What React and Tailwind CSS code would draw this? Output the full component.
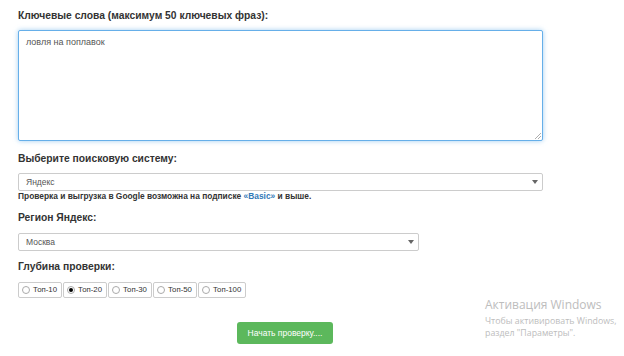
import { useState } from "react";

const depths = ["Топ-10", "Топ-20", "Топ-30", "Топ-50", "Топ-100"];

function Arrow() {
  return (
    <svg width="6" height="4" viewBox="0 0 6 4" className="shrink-0">
      <path d="M0 0 L6 0 L3 4 Z" fill="#666" />
    </svg>
  );
}

export default function App() {
  const [depth, setDepth] = useState("Топ-20");

  return (
    <div
      className="relative w-[624px] h-[356px] bg-white overflow-hidden text-[#333]"
      style={{ fontFamily: '"Liberation Sans", Arial, sans-serif' }}
    >
      <div className="pl-[18px] pt-[9px] flex flex-col">
        {/* Keywords */}
        <label className="h-[14px] leading-[14px] text-[10.3px] font-bold">
          Ключевые слова (максимум 50 ключевых фраз):
        </label>
        <div className="relative mt-[7px] w-[525px] h-[111px] border border-[#66afe9] rounded-[2px] shadow-[0_0_5px_rgba(102,175,233,0.6)] bg-white">
          <div className="pl-[7px] pt-[6px] text-[9px] leading-[11px] text-[#555]">
            ловля на поплавок
          </div>
          <svg width="6" height="6" viewBox="0 0 6 6" className="absolute right-[1px] bottom-[1px]">
            <path d="M6 0 L0 6 M6 3 L3 6" stroke="#999" strokeWidth="0.8" />
          </svg>
        </div>

        {/* Search engine */}
        <label className="mt-[11px] h-[14px] leading-[14px] text-[10.3px] font-bold">
          Выберите поисковую систему:
        </label>
        <div className="mt-[7px] w-[525px] h-[18px] border border-[#ccc] rounded-[2px] flex items-center justify-between pl-[7px] pr-[4px]">
          <span className="text-[8.5px] text-[#555]">Яндекс</span>
          <Arrow />
        </div>
        <p className="h-[11px] leading-[11px] text-[8.4px] font-bold whitespace-nowrap">
          Проверка и выгрузка в Google возможна на подписке{" "}
          <span className="text-[#337ab7]">«Basic»</span> и выше.
        </p>

        {/* Region */}
        <label className="mt-[9px] h-[14px] leading-[14px] text-[10.3px] font-bold">
          Регион Яндекс:
        </label>
        <div className="mt-[8px] w-[401px] h-[18px] border border-[#ccc] rounded-[2px] flex items-center justify-between pl-[7px] pr-[4px]">
          <span className="text-[8.5px] text-[#555]">Москва</span>
          <Arrow />
        </div>

        {/* Depth */}
        <label className="mt-[9px] h-[14px] leading-[14px] text-[10.3px] font-bold">
          Глубина проверки:
        </label>
        <div className="mt-[8px] flex gap-[1px]">
          {depths.map((d) => (
            <button
              key={d}
              onClick={() => setDepth(d)}
              className="h-[16px] border border-[#ccc] rounded-[2px] flex items-center gap-[3px] pl-[3px] pr-[4px] text-[7.8px] text-[#333]"
            >
              <span className="w-[8px] h-[8px] rounded-full border border-[#aaa] flex items-center justify-center bg-white">
                {depth === d && <span className="w-[4px] h-[4px] rounded-full bg-black" />}
              </span>
              {d}
            </button>
          ))}
        </div>

        {/* Submit */}
        <div className="mt-[21px] pl-[219px]">
          <button className="w-[96px] h-[22px] rounded-[3px] bg-[#5cb85c] text-white text-[8.5px]">
            Начать проверку....
          </button>
        </div>
      </div>

      {/* Windows activation watermark */}
      <div
        className="absolute left-[485px] top-[297px] text-[#bdbdbd] pointer-events-none"
        style={{ fontFamily: '"Open Sans", "Noto Sans", sans-serif' }}
      >
        <div className="text-[12px] leading-[16px]">Активация Windows</div>
        <div className="text-[8.8px] leading-[12px] mt-[2px] whitespace-nowrap">Чтобы активировать Windows,</div>
        <div className="text-[8.8px] leading-[12px] whitespace-nowrap">раздел "Параметры".</div>
      </div>
    </div>
  );
}
